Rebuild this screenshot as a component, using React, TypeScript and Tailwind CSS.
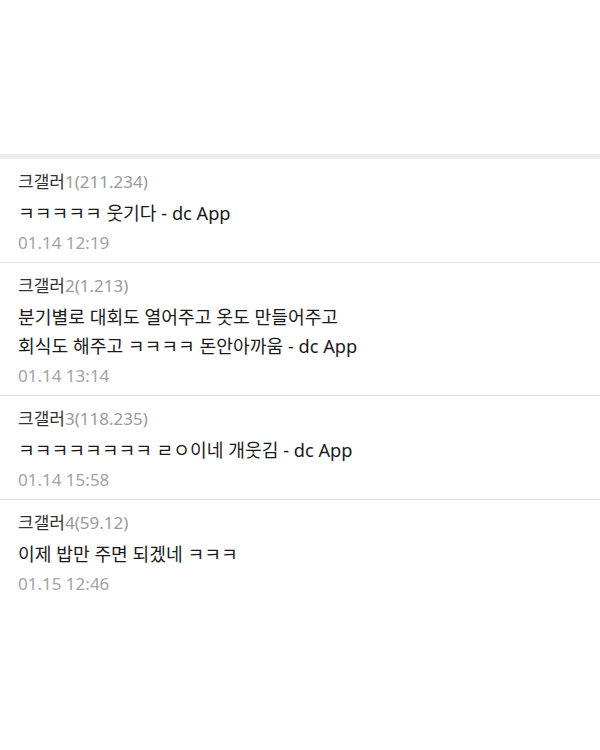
import React from "react";

const comments = [
  { name: "크갤러", num: "1", ip: "(211.234)", lines: ["ㅋㅋㅋㅋㅋ 웃기다 - dc App"], date: "01.14 12:19" },
  { name: "크갤러", num: "2", ip: "(1.213)", lines: ["분기별로 대회도 열어주고 옷도 만들어주고", "회식도 해주고 ㅋㅋㅋㅋ 돈안아까움 - dc App"], date: "01.14 13:14" },
  { name: "크갤러", num: "3", ip: "(118.235)", lines: ["ㅋㅋㅋㅋㅋㅋㅋㅋ ㄹㅇ이네 개웃김 - dc App"], date: "01.14 15:58" },
  { name: "크갤러", num: "4", ip: "(59.12)", lines: ["이제 밥만 주면 되겠네 ㅋㅋㅋ"], date: "01.15 12:46" },
];

export default function App() {
  return (
    <div
      className="w-[600px] h-[750px] bg-white"
      style={{ fontFamily: '"Noto Sans", "Noto Sans CJK KR", sans-serif' }}
    >
      <div className="h-[154px]" />
      <div className="h-[5px] bg-[#eaeaf1]" />
      <div>
        {comments.map((c, i) => (
          <div
            key={i}
            className={`pl-[18px] pt-[8px] pb-[5px] ${i < comments.length - 1 ? "border-b border-[#e2e2e2]" : ""}`}
          >
            <div className="text-[17px] leading-[29px]">
              <span className="text-[#333333]">{c.name}</span>
              <span className="text-[#9a9a9a]">{c.num}{c.ip}</span>
            </div>
            <div className="mt-[3px] text-[18.2px] leading-[29px] text-[#1a1a1a]">
              {c.lines.map((l, j) => (
                <div key={j}>{l}</div>
              ))}
            </div>
            <div className="text-[17px] leading-[29px] text-[#a3a3a3]">{c.date}</div>
          </div>
        ))}
      </div>
    </div>
  );
}
